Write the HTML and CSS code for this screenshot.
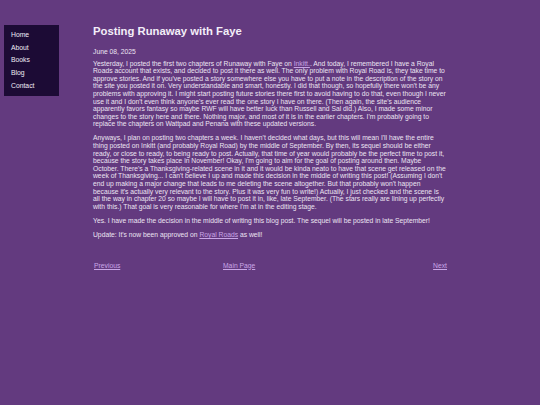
FILE: index.html
```html
<!DOCTYPE html>
<html lang="en">
<head>
<meta charset="utf-8">
<title>Posting Runaway with Faye</title>
<link rel="stylesheet" href="styles.css">
</head>
<body>
<div class="page">
  <nav class="sidebar">
    <ul class="menu">
      <li><a href="#">Home</a></li>
      <li><a href="#">About</a></li>
      <li><a href="#">Books</a></li>
      <li><a href="#">Blog</a></li>
      <li><a href="#">Contact</a></li>
    </ul>
  </nav>
  <main class="content">
    <h1 class="title">Posting Runaway with Faye</h1>
    <p class="date">June 08, 2025</p>
    <p class="para first">Yesterday, I posted the first two chapters of Runaway with Faye on <a href="#">Inkitt.</a>. And today, I remembered I have a Royal Roads account that exists, and decided to post it there as well. The only problem with Royal Road is, they take time to approve stories. And if you've posted a story somewhere else you have to put a note in the description of the story on the site you posted it on. Very understandable and smart, honestly. I did that though, so hopefully there won't be any problems with approving it. I might start posting future stories there first to avoid having to do that, even though I never use it and I don't even think anyone's ever read the one story I have on there. (Then again, the site's audience apparently favors fantasy so maybe RWF will have better luck than Russell and Sal did.) Also, I made some minor changes to the story here and there. Nothing major, and most of it is in the earlier chapters. I'm probably going to replace the chapters on Wattpad and Penana with these updated versions.</p>
    <p class="para">Anyways, I plan on posting two chapters a week. I haven't decided what days, but this will mean I'll have the entire thing posted on Inkitt (and probably Royal Road) by the middle of September. By then, its sequel should be either ready, or close to ready, to being ready to post. Actually, that time of year would probably be the perfect time to post it, because the story takes place in November! Okay, I'm going to aim for the goal of posting around then. Maybe October. There's a Thanksgiving-related scene in it and it would be kinda neato to have that scene get released on the week of Thanksgiving... I can't believe I up and made this decision in the middle of writing this post! (Assuming I don't end up making a major change that leads to me deleting the scene altogether. But that probably won't happen because it's actually very relevant to the story. Plus it was very fun to write!) Actually, I just checked and the scene is all the way in chapter 20 so maybe I will have to post it in, like, late September. (The stars really are lining up perfectly with this.) That goal is very reasonable for where I'm at in the editing stage.</p>
    <p class="para">Yes. I have made the decision in the middle of writing this blog post. The sequel will be posted in late September!</p>
    <p class="para">Update: It's now been approved on <a href="#">Royal Roads</a> as well!</p>
    <div class="pager">
      <a href="#" class="prev">Previous</a>
      <a href="#" class="main">Main Page</a>
      <a href="#" class="next">Next</a>
    </div>
  </main>
</div>
</body>
</html>
```

FILE: styles.css
```css
html, body {
  margin: 0;
  padding: 0;
  background: #633a7f;
  height: 100%;
}
body {
  font-family: "Liberation Sans", Arial, sans-serif;
  color: #ece4f2;
}
a {
  color: #c9a6e6;
  text-decoration: underline;
}
.page {
  display: flex;
  align-items: flex-start;
  padding-top: 25px;
}
.sidebar {
  margin-left: 4px;
  width: 55px;
  height: 71px;
  background: #1c0b35;
  box-sizing: border-box;
  padding: 6px 0 0 7px;
}
.menu {
  list-style: none;
  margin: 0;
  padding: 0;
  display: flex;
  flex-direction: column;
  gap: 4.7px;
}
.menu li {
  font-size: 6.8px;
  line-height: 8px;
}
.menu a {
  color: #f0ebf6;
  text-decoration: none;
}
.content {
  margin-left: 34px;
  width: 354px;
}
.title {
  font-size: 11.3px;
  font-weight: bold;
  margin: 0;
  line-height: 13px;
  color: #f3eef8;
}
.date {
  font-size: 6.75px;
  line-height: 7.6px;
  margin: 10px 0 0;
}
.para {
  font-size: 6.75px;
  line-height: 7.6px;
  margin: 6.5px 0 0;
}
.para.first {
  margin-top: 4px;
}
.pager {
  display: grid;
  grid-template-columns: 129px 1fr auto;
  font-size: 6.75px;
  line-height: 7.6px;
  margin-top: 23px;
  padding-left: 1px;
}
```
